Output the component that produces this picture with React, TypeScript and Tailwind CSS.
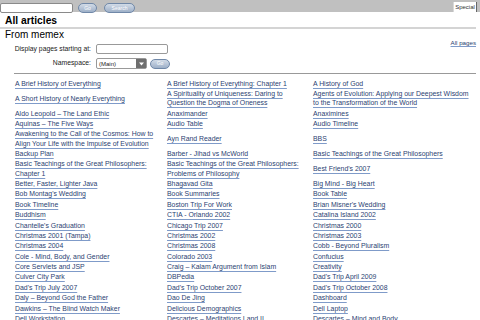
import React from 'react';

type Cell = string[];

const rows: Cell[][] = [
  [['A Brief History of Everything'], ['A Brief History of Everything: Chapter 1'], ['A History of God']],
  [['A Short History of Nearly Everything'], ['A Spirituality of Uniqueness: Daring to', 'Question the Dogma of Oneness'], ['Agents of Evolution: Applying our Deepest Wisdom', 'to the Transformation of the World']],
  [['Aldo Leopold – The Land Ethic'], ['Anaximander'], ['Anaximines']],
  [['Aquinas – The Five Ways'], ['Audio Table'], ['Audio Timeline']],
  [['Awakening to the Call of the Cosmos: How to', 'Align Your Life with the Impulse of Evolution'], ['Ayn Rand Reader'], ['BBS']],
  [['Backup Plan'], ['Barber - Jihad vs McWorld'], ['Basic Teachings of the Great Philosophers']],
  [['Basic Teachings of the Great Philosophers:', 'Chapter 1'], ['Basic Teachings of the Great Philosophers:', 'Problems of Philosophy'], ["Best Friend's 2007"]],
  [['Better, Faster, Lighter Java'], ['Bhagavad Gita'], ['Big Mind - Big Heart']],
  [["Bob Montag's Wedding"], ['Book Summaries'], ['Book Table']],
  [['Book Timeline'], ['Boston Trip For Work'], ["Brian Misner's Wedding"]],
  [['Buddhism'], ['CTIA - Orlando 2002'], ['Catalina Island 2002']],
  [["Chantelle's Graduation"], ['Chicago Trip 2007'], ['Christmas 2000']],
  [['Christmas 2001 (Tampa)'], ['Christmas 2002'], ['Christmas 2003']],
  [['Christmas 2004'], ['Christmas 2008'], ['Cobb - Beyond Pluralism']],
  [['Cole - Mind, Body, and Gender'], ['Colorado 2003'], ['Confucius']],
  [['Core Servlets and JSP'], ['Craig – Kalam Argument from Islam'], ['Creativity']],
  [['Culver City Park'], ['DBPedia'], ["Dad's Trip April 2009"]],
  [["Dad's Trip July 2007"], ["Dad's Trip October 2007"], ["Dad's Trip October 2008"]],
  [['Daly – Beyond God the Father'], ['Dao De Jing'], ['Dashboard']],
  [['Dawkins – The Blind Watch Maker'], ['Delicious Demographics'], ['Dell Laptop']],
  [['Dell Workstation'], ['Descartes – Meditations I and II'], ['Descartes – Mind and Body']],
];

function PillButton({ label, w }: { label: string; w: string }) {
  return (
    <div
      className={`${w} h-[10px] rounded-full border border-[#7088a8] bg-gradient-to-b from-[#d2dbe7] to-[#9eb0c8] flex items-center justify-center text-[5px] leading-none text-white`}
    >
      {label}
    </div>
  );
}

export default function App() {
  return (
    <div className="w-[480px] h-[320px] overflow-hidden bg-white font-['Liberation_Sans',Arial,sans-serif] text-black">
      {/* Top bar */}
      <div className="h-[12px] bg-[#c0c0c0] flex items-start">
        <div className="mt-[3px] w-[73px] h-[10px] bg-white border border-[#8a8a8a] rounded-[2px]" />
        <div className="mt-[3px] ml-[5px]">
          <PillButton label="Go" w="w-[19px]" />
        </div>
        <div className="mt-[3px] ml-[7px]">
          <PillButton label="Search" w="w-[31px]" />
        </div>
        <div className="ml-auto mr-[3px] mt-[2px] h-[10px] w-[24px] bg-white border-l border-[#d8d8d8] border-r border-r-[#666] flex items-center justify-center text-[6px] leading-none text-[#333]">
          Special
        </div>
      </div>

      {/* Heading */}
      <div className="mr-[4px] border-b-2 border-[#d4d4d4] pl-[5px]">
        <div className="mt-[2px] text-[10.3px] leading-[13px] font-bold">All articles</div>
      </div>
      <div className="pl-[5px] text-[10px] leading-[12px]">From memex</div>

      {/* Form */}
      <div className="flex mr-[4px]">
        <div className="grid grid-cols-[91px_auto] gap-x-[5px] gap-y-[4px] items-center mt-[3px] text-[6.8px] leading-none text-[#222]">
          <div className="text-right">Display pages starting at:</div>
          <div className="w-[72px] h-[10px] border border-[#999] rounded-[2px] bg-white" />
          <div className="text-right">Namespace:</div>
          <div className="flex items-center gap-[3px]">
            <div className="w-[51px] h-[11px] border border-[#999] rounded-[2px] bg-white flex items-stretch">
              <div className="flex-1 pl-[2px] text-[6px] flex items-center">(Main)</div>
              <div className="w-[10px] bg-[#6e6e6e] flex items-center justify-center">
                <svg width="5" height="4" viewBox="0 0 5 4">
                  <path d="M0 0.5 L5 0.5 L2.5 3.5 Z" fill="#fff" />
                </svg>
              </div>
            </div>
            <PillButton label="Go" w="w-[20px]" />
          </div>
        </div>
        <a className="ml-auto -mt-[2px] text-[6.2px] leading-[8px] text-[#253e6e] underline decoration-[#7f9bc9]">
          All pages
        </a>
      </div>

      <div className="ml-[14px] mr-[4px] mt-[4px] border-t border-[#999]" />

      {/* Article list */}
      <table className="ml-[15px] mt-[4px] table-fixed border-collapse">
        <colgroup>
          <col className="w-[152px]" />
          <col className="w-[146px]" />
          <col className="w-[163px]" />
        </colgroup>
        <tbody>
          {rows.map((row, i) => (
            <tr key={i}>
              {row.map((cell, j) => (
                <td key={j} className="p-0 py-[0.6px] align-middle whitespace-nowrap text-[6.9px] leading-[9.2px]">
                  {cell.map((line, k) => (
                    <div key={k}>
                      <a className="text-[#2b4272] underline decoration-[#7f9bc9] underline-offset-[1.5px]">{line}</a>
                    </div>
                  ))}
                </td>
              ))}
            </tr>
          ))}
        </tbody>
      </table>
    </div>
  );
}
